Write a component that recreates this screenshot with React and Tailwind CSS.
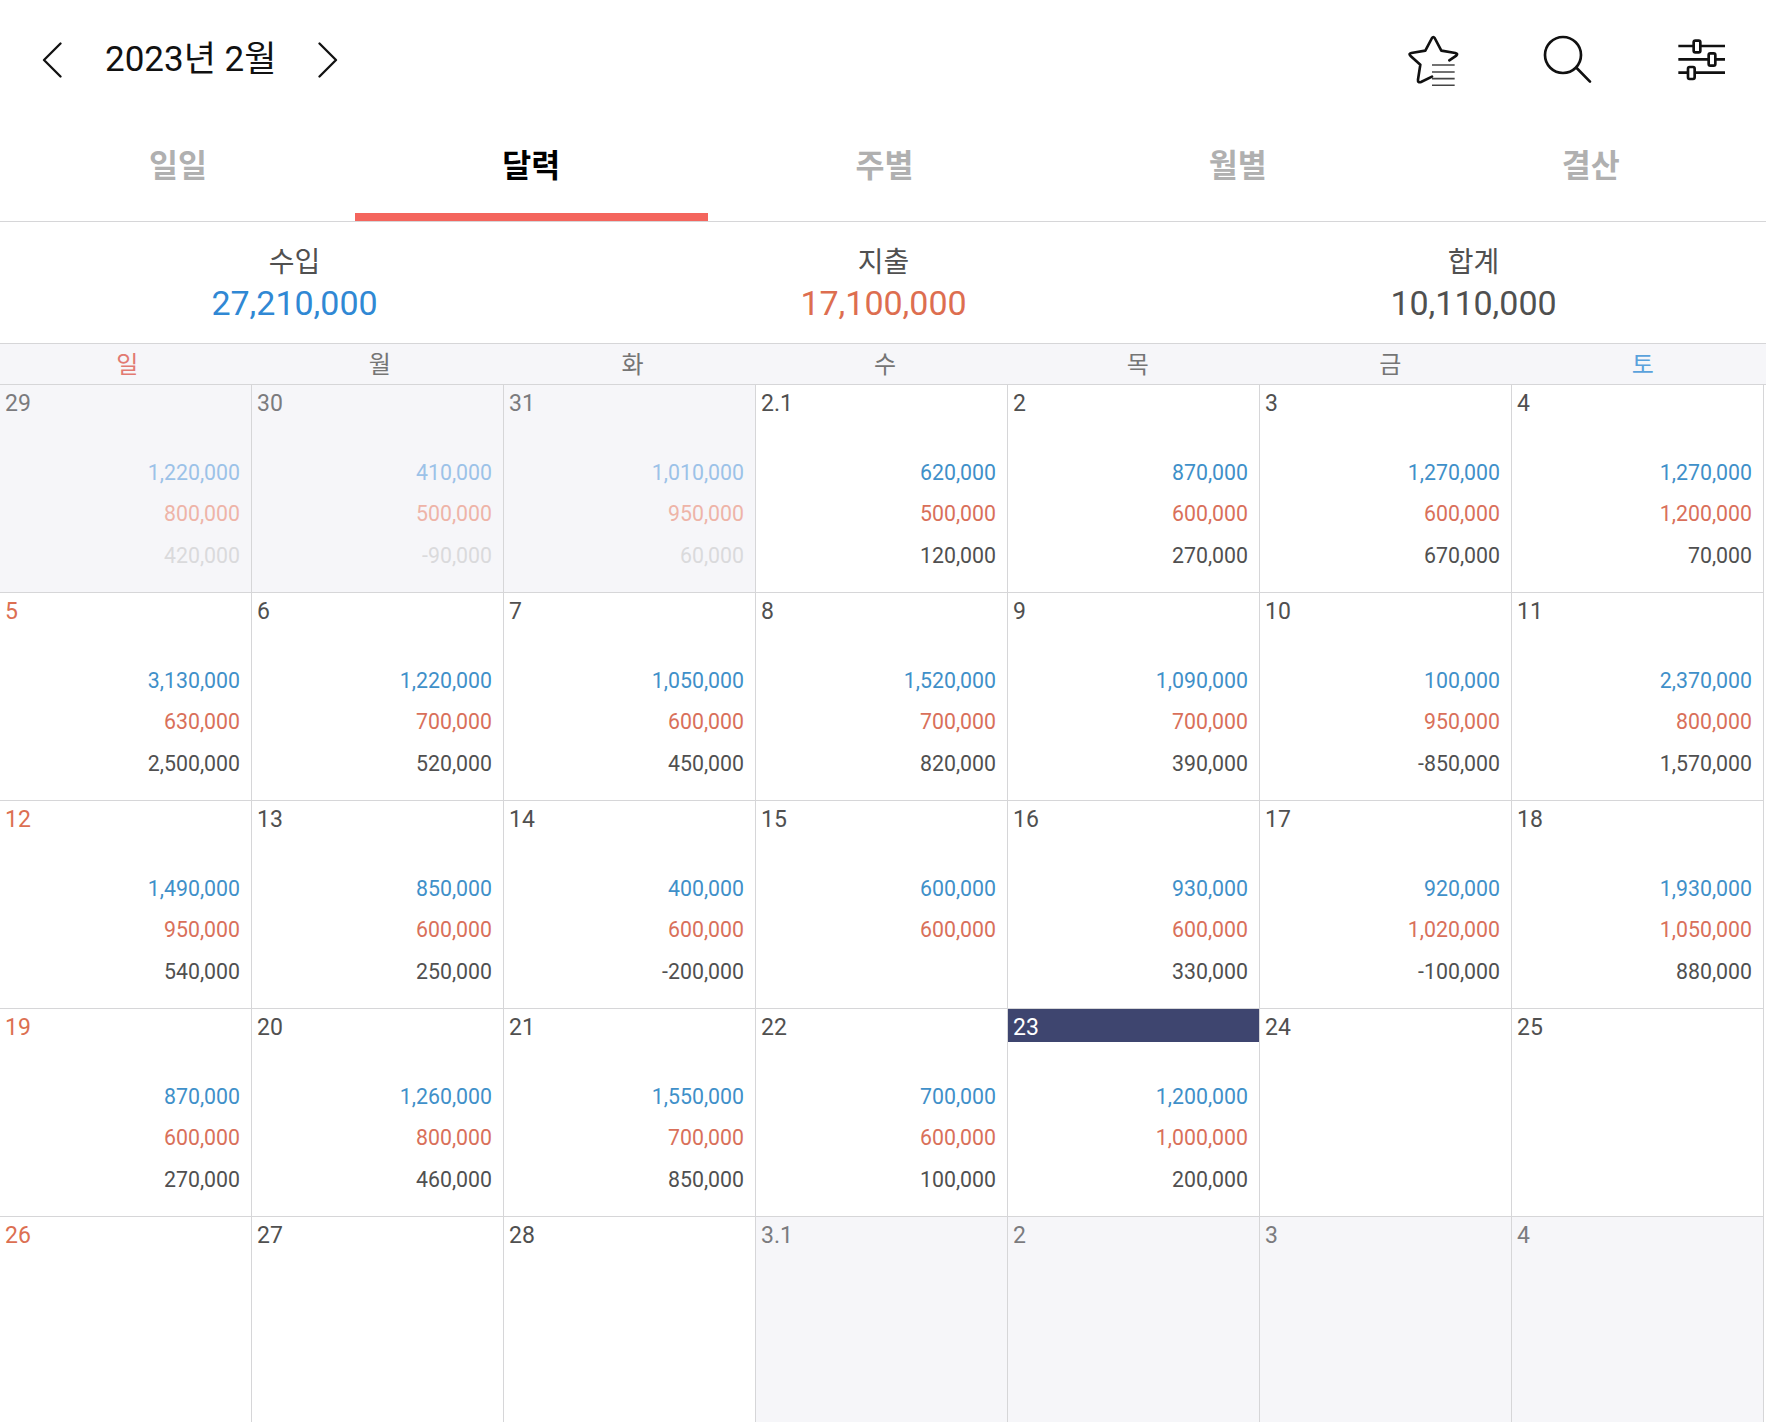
import React from 'react';

const FONT = '[font-family:Roboto,"Noto_Sans_CJK_KR",sans-serif]';

const tabs = ['일일', '달력', '주별', '월별', '결산'];

const summary = [
  { label: '수입', value: '27,210,000', color: 'text-[#3088d4]' },
  { label: '지출', value: '17,100,000', color: 'text-[#dd6e50]' },
  { label: '합계', value: '10,110,000', color: 'text-[#505050]' },
];

const weekdays = [
  { label: '일', color: 'text-[#e27a72]' },
  { label: '월', color: 'text-[#757575]' },
  { label: '화', color: 'text-[#757575]' },
  { label: '수', color: 'text-[#757575]' },
  { label: '목', color: 'text-[#757575]' },
  { label: '금', color: 'text-[#757575]' },
  { label: '토', color: 'text-[#5aa2dc]' },
];

// day, income, expense, total, muted
const weeks = [
  [
    ['29', '1,220,000', '800,000', '420,000', true],
    ['30', '410,000', '500,000', '-90,000', true],
    ['31', '1,010,000', '950,000', '60,000', true],
    ['2.1', '620,000', '500,000', '120,000'],
    ['2', '870,000', '600,000', '270,000'],
    ['3', '1,270,000', '600,000', '670,000'],
    ['4', '1,270,000', '1,200,000', '70,000'],
  ],
  [
    ['5', '3,130,000', '630,000', '2,500,000'],
    ['6', '1,220,000', '700,000', '520,000'],
    ['7', '1,050,000', '600,000', '450,000'],
    ['8', '1,520,000', '700,000', '820,000'],
    ['9', '1,090,000', '700,000', '390,000'],
    ['10', '100,000', '950,000', '-850,000'],
    ['11', '2,370,000', '800,000', '1,570,000'],
  ],
  [
    ['12', '1,490,000', '950,000', '540,000'],
    ['13', '850,000', '600,000', '250,000'],
    ['14', '400,000', '600,000', '-200,000'],
    ['15', '600,000', '600,000', ''],
    ['16', '930,000', '600,000', '330,000'],
    ['17', '920,000', '1,020,000', '-100,000'],
    ['18', '1,930,000', '1,050,000', '880,000'],
  ],
  [
    ['19', '870,000', '600,000', '270,000'],
    ['20', '1,260,000', '800,000', '460,000'],
    ['21', '1,550,000', '700,000', '850,000'],
    ['22', '700,000', '600,000', '100,000'],
    ['23', '1,200,000', '1,000,000', '200,000'],
    ['24'],
    ['25'],
  ],
  [
    ['26'],
    ['27'],
    ['28'],
    ['3.1', null, null, null, true],
    ['2', null, null, null, true],
    ['3', null, null, null, true],
    ['4', null, null, null, true],
  ],
];

const ChevronIcon = ({ flip }) => (
  <svg width="20" height="36" viewBox="0 0 20 36" fill="none" stroke="#111" strokeWidth="2.300" strokeLinecap="round" strokeLinejoin="round" className="shrink-0">
    <path d={flip ? 'M1.500 1.500L18 18 1.500 34.500' : 'M18.500 1.500L2 18l16.500 16.500'} />
  </svg>
);

const StarListIcon = () => (
  <svg width="53.33" height="53.33" viewBox="120 95 160 160" fill="none" className="shrink-0">
    <path d="M198 226L165 242Q155 245 156 235L163 190L133 163Q127 157 136 155L178 148L198 110Q202 104 206 110L226 148L268 155Q277 157 271 163L250 177" stroke="#111" strokeWidth="8" strokeLinecap="round" strokeLinejoin="round" />
    <path d="M198 191H266M198 212H266M198 232H266M198 252H266" stroke="#444" strokeWidth="5" />
  </svg>
);

const SearchIcon = () => (
  <svg width="53.33" height="53.33" viewBox="525 95 160 160" fill="none" stroke="#111" strokeWidth="8" strokeLinecap="round" className="shrink-0">
    <circle cx="591" cy="161" r="54" />
    <path d="M632 200L672 241" />
  </svg>
);

const SlidersIcon = () => (
  <svg width="51.67" height="53.33" viewBox="930 95 155 160" fill="none" stroke="#111" strokeWidth="8" className="shrink-0">
    <path d="M937 134H1077M937 174H1077M937 214H1077" />
    <rect x="983" y="118" width="20" height="35" rx="5" fill="#fff" />
    <rect x="1028" y="156" width="20" height="37" rx="5" fill="#fff" />
    <rect x="966" y="197" width="20" height="36" rx="5" fill="#fff" />
  </svg>
);

const DayCell = ({ cell, col, week }) => {
  const [day, income, expense, total, muted] = cell;
  const isToday = day === '23';
  let dayColor = muted ? 'text-[#7b7b7e]' : 'text-[#505050]';
  if (col === 0) dayColor = muted ? 'text-[#7b7b7e]' : 'text-[#dc6f52]';
  if (isToday) dayColor = 'text-white bg-[#3e456f]';

  return (
    <div className={`border-r border-b border-[#d6d6d8] ${muted ? 'bg-[#f6f6f9]' : 'bg-white'} ${week === 4 ? 'h-[206px]' : 'h-[208px]'}`}>
      <div className={`h-[33px] pl-[5px] text-[23px] leading-[38px] ${dayColor}`}>{day}</div>
      {income && (
        <div className="mt-[34px] pr-[11px] text-right text-[21.3px] leading-[41px]">
          <div className={muted ? 'text-[#9cc2e8]' : 'text-[#3f90c9]'}>{income}</div>
          <div className={muted ? 'text-[#eeb4a8]' : 'text-[#d9705a]'}>{expense}</div>
          <div className={`h-[41px] pt-[1px] ${muted ? 'text-[#dadadc]' : 'text-[#505050]'}`}>{total}</div>
        </div>
      )}
    </div>
  );
};

export default function App() {
  return (
    <div className={`w-[1766px] h-[1422px] overflow-hidden bg-white ${FONT}`}>
      {/* Top bar */}
      <div className="h-[116px] flex items-center justify-between pt-[3px] pl-[42px] pr-[38px]">
        <div className="flex items-center">
          <ChevronIcon />
          <span className="ml-[43px] pt-[2px] text-[35px] text-[#111]">2023년 2월</span>
          <span className="ml-[42px] flex"><ChevronIcon flip /></span>
        </div>
        <div className="flex items-center gap-[81.67px]">
          <StarListIcon />
          <SearchIcon />
          <SlidersIcon />
        </div>
      </div>

      {/* Tabs */}
      <div className="grid grid-cols-[repeat(5,353.2px)] h-[106px] pl-[1.5px] border-b border-[#d6d6d8]">
        {tabs.map((tab) => (
          <div
            key={tab}
            className={`flex items-center justify-center border-b-[8px] pt-[5px] text-[31.5px] font-bold ${tab === '달력' ? 'border-[#f4655d] text-black' : 'border-transparent text-[#b0b0b0]'}`}
          >
            {tab}
          </div>
        ))}
      </div>

      {/* Summary */}
      <div className="grid grid-cols-[589px_589px_591px] h-[122px] border-b border-[#d6d6d8] pt-[21px] text-center">
        {summary.map((item) => (
          <div key={item.label}>
            <div className="text-[28px] leading-[40px] text-[#505050]">{item.label}</div>
            <div className={`text-[34px] leading-[40px] ${item.color}`}>{item.value}</div>
          </div>
        ))}
      </div>

      {/* Weekday header */}
      <div className="grid grid-cols-[repeat(7,252.6px)] h-[41px] pl-[1px] bg-[#f6f6f9] border-b border-[#d6d6d8]">
        {weekdays.map((d) => (
          <div key={d.label} className={`text-center text-[24px] leading-[43px] ${d.color}`}>{d.label}</div>
        ))}
      </div>

      {/* Calendar */}
      <div className="grid grid-cols-[repeat(7,252px)]">
        {weeks.map((week, w) =>
          week.map((cell, c) => <DayCell key={`${w}-${c}`} cell={cell} col={c} week={w} />)
        )}
      </div>
    </div>
  );
}
